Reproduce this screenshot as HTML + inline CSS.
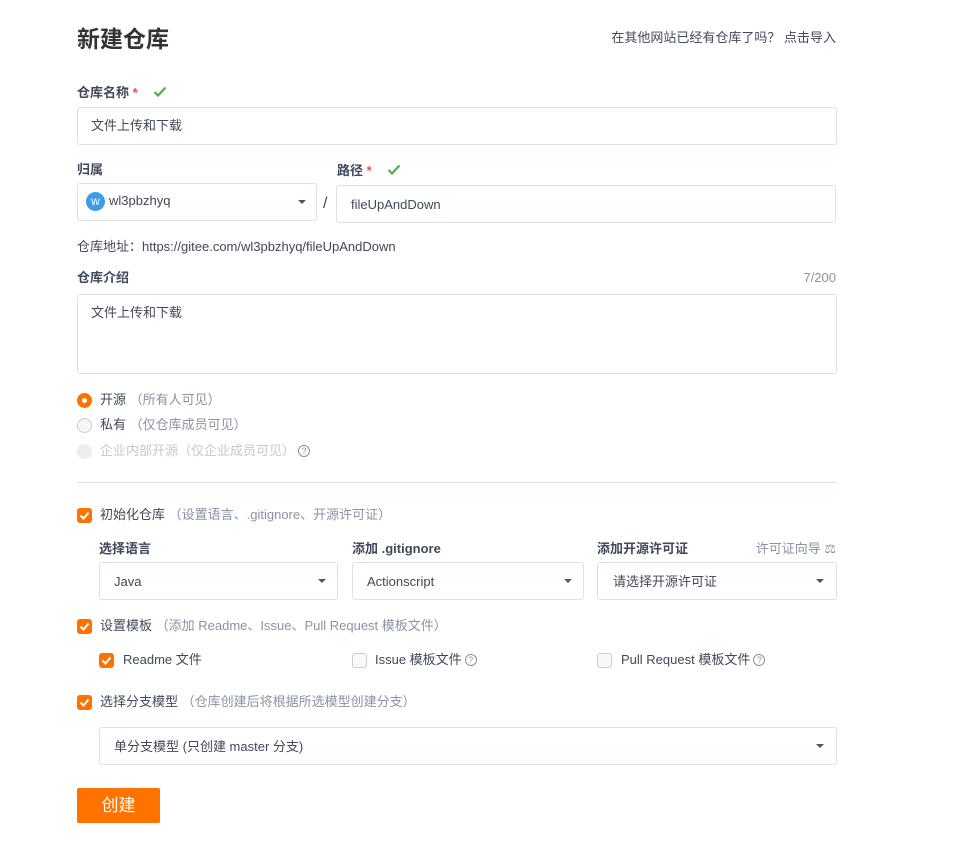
<!DOCTYPE html>
<html><head><meta charset="utf-8"><style>
*{box-sizing:border-box;margin:0;padding:0}
body{width:980px;height:841px;background:#fff;font-family:"Liberation Sans","Noto Sans CJK SC",sans-serif;font-size:13px;color:#40485b;position:relative;overflow:hidden}
.a{position:absolute;white-space:nowrap;line-height:16px}
.b{font-weight:bold}
.g{color:#8c92a4}
.box{position:absolute;border:1px solid #dce3e8;border-radius:3px;background:#fff}
.st{color:#f44;}
.car{position:absolute;width:0;height:0;border-left:4px solid transparent;border-right:4px solid transparent;border-top:4px solid #555}
.cb{position:absolute;width:15px;height:15px;border-radius:3px;background:#fe7300}
.cb svg{position:absolute;left:2px;top:2px}
.cbe{position:absolute;width:15px;height:15px;border-radius:3px;border:1px solid #c8cdd6;background:#f7f8fa}
.q{display:inline-block;width:12px;height:12px;border:1px solid #8c92a4;border-radius:50%;font-size:9px;line-height:10px;text-align:center;color:#8c92a4;vertical-align:1px;margin-left:3px}
</style></head><body>
<div class="a b" style="left:77px;top:26px;font-size:23px;line-height:26px;color:#333">新建仓库</div>
<div class="a" style="right:144px;top:30px">在其他网站已经有仓库了吗？ 点击导入</div>

<div class="a b" style="left:77px;top:85px">仓库名称 <span class="st">*</span></div>
<svg class="a" style="left:153px;top:86px" width="14" height="12" viewBox="0 0 14 12"><path d="M1.5 6l3.5 3.5 7.5-8" stroke="#4caf50" stroke-width="2.2" fill="none"/></svg>
<div class="box" style="left:77px;top:107px;width:760px;height:38px"></div>
<div class="a" style="left:91px;top:118px">文件上传和下载</div>

<div class="a b" style="left:77px;top:162px">归属</div>
<div class="box" style="left:77px;top:183px;width:240px;height:38px"></div>
<div class="a" style="left:86px;top:192px;width:19px;height:19px;border-radius:50%;background:#3d9be9;color:#fff;text-align:center;line-height:19px;font-size:12px">w</div>
<div class="a" style="left:109px;top:193px">wl3pbzhyq</div>
<div class="car" style="left:298px;top:200px"></div>
<div class="a" style="left:323px;top:196px;font-size:16px">/</div>
<div class="a b" style="left:337px;top:163px">路径 <span class="st">*</span></div>
<svg class="a" style="left:387px;top:164px" width="14" height="12" viewBox="0 0 14 12"><path d="M1.5 6l3.5 3.5 7.5-8" stroke="#4caf50" stroke-width="2.2" fill="none"/></svg>
<div class="box" style="left:336px;top:185px;width:500px;height:38px"></div>
<div class="a" style="left:351px;top:197px">fileUpAndDown</div>

<div class="a" style="left:77px;top:239px">仓库地址：https://gitee.com/wl3pbzhyq/fileUpAndDown</div>

<div class="a b" style="left:77px;top:270px">仓库介绍</div>
<div class="a g" style="right:144px;top:270px">7/200</div>
<div class="box" style="left:77px;top:294px;width:760px;height:80px"></div>
<div class="a" style="left:91px;top:305px">文件上传和下载</div>

<div class="a" style="left:77px;top:393px;width:15px;height:15px;border-radius:50%;background:#fe7300"><div style="position:absolute;left:5px;top:5px;width:5px;height:5px;border-radius:50%;background:#fff"></div></div>
<div class="a" style="left:100px;top:392px">开源 <span class="g">（所有人可见）</span></div>
<div class="a" style="left:77px;top:418px;width:15px;height:15px;border-radius:50%;border:1px solid #c8cdd6;background:#f5f6f8"></div>
<div class="a" style="left:100px;top:417px">私有 <span class="g">（仅仓库成员可见）</span></div>
<div class="a" style="left:77px;top:444px;width:15px;height:15px;border-radius:50%;background:#eceef1"></div>
<div class="a" style="left:100px;top:443px;color:#c4c8d0">企业内部开源（仅企业成员可见）<span class="q">?</span></div>

<div class="a" style="left:77px;top:482px;width:760px;height:1px;background:#dce3e8"></div>

<div class="cb" style="left:77px;top:508px"><svg width="11" height="11" viewBox="0 0 11 11"><path d="M1.5 5.5l3 3 5-6" stroke="#fff" stroke-width="2" fill="none"/></svg></div>
<div class="a" style="left:100px;top:507px">初始化仓库 <span class="g">（设置语言、.gitignore、开源许可证）</span></div>

<div class="a b" style="left:99px;top:541px">选择语言</div>
<div class="a b" style="left:352px;top:541px">添加 .gitignore</div>
<div class="a b" style="left:597px;top:541px">添加开源许可证</div>
<div class="a g" style="right:144px;top:541px">许可证向导 ⚖</div>
<div class="box" style="left:99px;top:562px;width:239px;height:38px"></div>
<div class="a" style="left:114px;top:574px">Java</div>
<div class="car" style="left:318px;top:579px"></div>
<div class="box" style="left:352px;top:562px;width:232px;height:38px"></div>
<div class="a" style="left:367px;top:574px">Actionscript</div>
<div class="car" style="left:564px;top:579px"></div>
<div class="box" style="left:597px;top:562px;width:240px;height:38px"></div>
<div class="a" style="left:613px;top:574px">请选择开源许可证</div>
<div class="car" style="left:816px;top:579px"></div>

<div class="cb" style="left:77px;top:619px"><svg width="11" height="11" viewBox="0 0 11 11"><path d="M1.5 5.5l3 3 5-6" stroke="#fff" stroke-width="2" fill="none"/></svg></div>
<div class="a" style="left:100px;top:618px">设置模板 <span class="g">（添加 Readme、Issue、Pull Request 模板文件）</span></div>

<div class="cb" style="left:99px;top:653px"><svg width="11" height="11" viewBox="0 0 11 11"><path d="M1.5 5.5l3 3 5-6" stroke="#fff" stroke-width="2" fill="none"/></svg></div>
<div class="a" style="left:123px;top:652px">Readme 文件</div>
<div class="cbe" style="left:352px;top:653px"></div>
<div class="a" style="left:375px;top:652px">Issue 模板文件<span class="q">?</span></div>
<div class="cbe" style="left:597px;top:653px"></div>
<div class="a" style="left:621px;top:652px">Pull Request 模板文件<span class="q">?</span></div>

<div class="cb" style="left:77px;top:695px"><svg width="11" height="11" viewBox="0 0 11 11"><path d="M1.5 5.5l3 3 5-6" stroke="#fff" stroke-width="2" fill="none"/></svg></div>
<div class="a" style="left:100px;top:694px">选择分支模型 <span class="g">（仓库创建后将根据所选模型创建分支）</span></div>
<div class="box" style="left:99px;top:727px;width:738px;height:38px"></div>
<div class="a" style="left:114px;top:739px">单分支模型 (只创建 master 分支)</div>
<div class="car" style="left:816px;top:744px"></div>

<div class="a" style="left:77px;top:788px;width:83px;height:35px;background:#fe7300;border-radius:2px;color:#fff;font-size:17px;line-height:35px;text-align:center">创建</div>
</body></html>
